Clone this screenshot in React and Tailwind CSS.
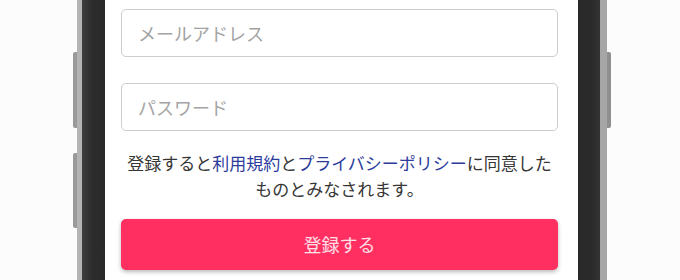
import React from "react";

const jp = { fontFamily: '"Noto Sans CJK JP", "Noto Sans", sans-serif' };

export default function App() {
  return (
    <div className="w-[680px] h-[280px] overflow-hidden bg-[#fcfcfc] flex" style={jp}>
      {/* Phone frame */}
      <div className="relative ml-[77px] w-[530px] h-full flex bg-[linear-gradient(to_right,#b4b4b4,#a6a6a6)]">
        {/* Side buttons */}
        <div className="absolute left-[-4px] top-[52px] w-[4px] h-[76px] rounded-l-[2px] bg-[#9a9a9a]" />
        <div className="absolute left-[-4px] top-[153px] w-[4px] h-[75px] rounded-l-[2px] bg-[#9a9a9a]" />
        <div className="absolute right-[-4px] top-[52px] w-[4px] h-[76px] rounded-r-[2px] bg-[#8f8f8f]" />

        <div className="w-[5px] shrink-0" />
        <div className="w-[23px] shrink-0 bg-[linear-gradient(to_right,#3e3e3e,#2c2c2c_45%,#2a2a2a)]" />

        {/* Screen */}
        <div className="w-[473px] shrink-0 bg-white pl-[16px] pr-[20px] pt-[9px]">
          <input
            type="email"
            placeholder="メールアドレス"
            className="block w-full h-[48px] border border-[#cdcdcd] rounded-[5px] px-[16px] text-[18px] text-[#333] placeholder:text-[#a3a3a3] outline-none"
          />
          <input
            type="password"
            placeholder="パスワード"
            className="block w-full h-[48px] mt-[26px] border border-[#cdcdcd] rounded-[5px] px-[16px] text-[18px] text-[#333] placeholder:text-[#a3a3a3] outline-none"
          />

          <p className="mt-[19px] text-center text-[17px] leading-[26px] text-[#363636]">
            登録すると<a className="text-[#2c3c9c]">利用規約</a>と<a className="text-[#2c3c9c]">プライバシーポリシー</a>に同意したものとみなされます。
          </p>

          <button className="mt-[17px] w-full h-[51px] rounded-[5px] bg-[#ff2f62] text-[18px] text-white/85 shadow-[0_2px_4px_rgba(0,0,0,0.28)]">
            登録する
          </button>
        </div>

        <div className="w-[22px] shrink-0 bg-[linear-gradient(to_left,#333,#2a2a2a_40%,#2a2a2a)]" />
        <div className="w-[7px] shrink-0" />
      </div>
    </div>
  );
}
